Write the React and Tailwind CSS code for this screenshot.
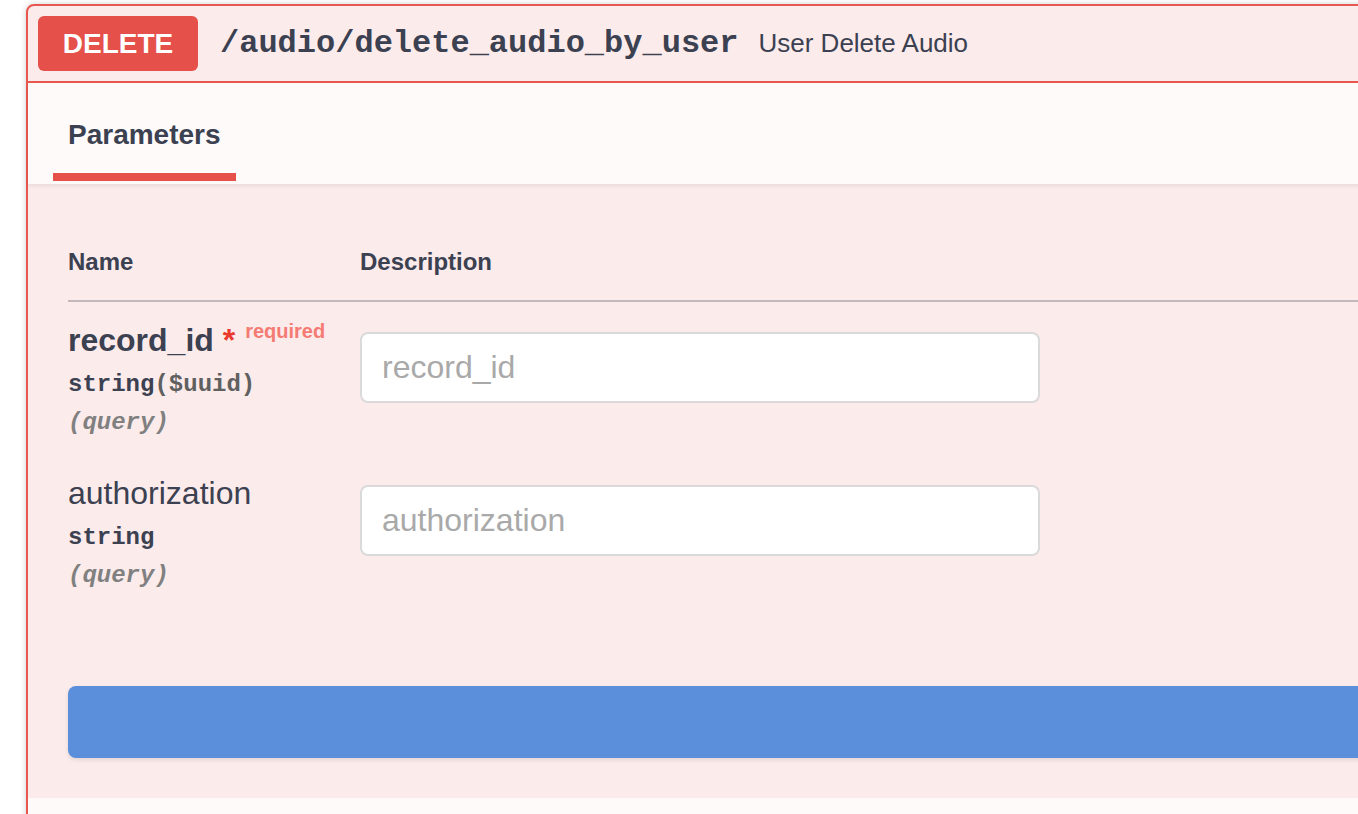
import React from 'react';

const SANS = { fontFamily: '"Liberation Sans", Arial, sans-serif' };

const PARAMS = [
  { name: 'record_id', required: true, type: 'string', format: '($uuid)', where: '(query)' },
  { name: 'authorization', required: false, type: 'string', format: '', where: '(query)' },
];

const ParamRow = ({ p }) => (
  <div className="flex pt-[20px] pb-[18px]">
    <div className="w-[292px] shrink-0">
      <div className={`h-[39px] text-[32px] leading-[36px] text-[#3b4151] ${p.required ? 'font-bold' : 'font-normal'}`}>
        {p.name}
        {p.required && (
          <>
            <span className="text-[#ea3a2e] leading-none">&nbsp;*</span>
            <span className="relative top-[-13px] pl-[10px] text-[20px] leading-none font-bold text-[#f47b73]">required</span>
          </>
        )}
      </div>
      <div className="font-['Liberation_Mono',monospace] text-[24px] leading-[28px] font-bold text-[#3b4151] py-[10px]">
        {p.type}
        {p.format && <span className="text-[#606060]">{p.format}</span>}
      </div>
      <div className="font-['Liberation_Mono',monospace] text-[24px] leading-[28px] font-bold italic text-[#808080]">
        {p.where}
      </div>
    </div>
    <div className="flex-1">
      <input
        type="text"
        placeholder={p.name}
        className="mt-[10px] w-[680px] h-[71px] bg-white border-2 border-[#dadada] rounded-[8px] px-[20px] text-[32px] text-[#3b4151] placeholder:text-[#a9a9a9] outline-none"
        style={SANS}
      />
    </div>
  </div>
);

export default function App() {
  return (
    <div className="w-[1358px] h-[814px] overflow-hidden bg-white pt-[4px] pl-[26px]" style={SANS}>
      <div className="w-[4000px] border-2 border-[#e8574f] rounded-[8px] bg-[#fcebeb] shadow-[0_0_6px_rgba(0,0,0,0.19)]">
        {/* summary */}
        <div className="flex items-center p-[10px] border-b-2 border-[#e8574f]">
          <span className="w-[160px] h-[55px] flex items-center justify-center rounded-[6px] bg-[#e5504a] text-white text-[28px] font-bold">
            DELETE
          </span>
          <span className="pl-[22px] pr-[20px] font-['Liberation_Mono',monospace] text-[32px] font-bold text-[#3b4151]">
            /audio/delete_audio_by_user
          </span>
          <span className="text-[26px] text-[#3b4151]">User Delete Audio</span>
        </div>

        {/* tab header */}
        <div className="h-[101px] flex items-center px-[40px] bg-[#fdfaf9] shadow-[0_2px_4px_rgba(0,0,0,0.08)]">
          <span className="relative text-[28px] leading-[32px] font-bold text-[#3b4151] mt-[2px]">
            Parameters
            <span className="absolute left-[-10%] w-[120%] bottom-[-30px] h-[8px] bg-[#e5504a]" />
          </span>
        </div>

        {/* parameters table */}
        <div className="p-[40px] w-[1400px]">
          <div className="flex pt-[24px] pb-[24px] border-b-2 border-[#c3b8bb] text-[24px] leading-[28px] font-bold text-[#3b4151]">
            <div className="w-[292px]">Name</div>
            <div>Description</div>
          </div>
          {PARAMS.map((p) => (
            <ParamRow key={p.name} p={p} />
          ))}
        </div>

        {/* execute */}
        <div className="px-[40px] pt-[38px] pb-[40px]">
          <button
            aria-label="Execute"
            className="block w-full h-[72px] rounded-[8px] bg-[#5c8fdb] shadow-[0_2px_4px_rgba(0,0,0,0.1)]"
          />
        </div>

        <div className="h-[100px] bg-[#fdfaf9]" />
      </div>
    </div>
  );
}
